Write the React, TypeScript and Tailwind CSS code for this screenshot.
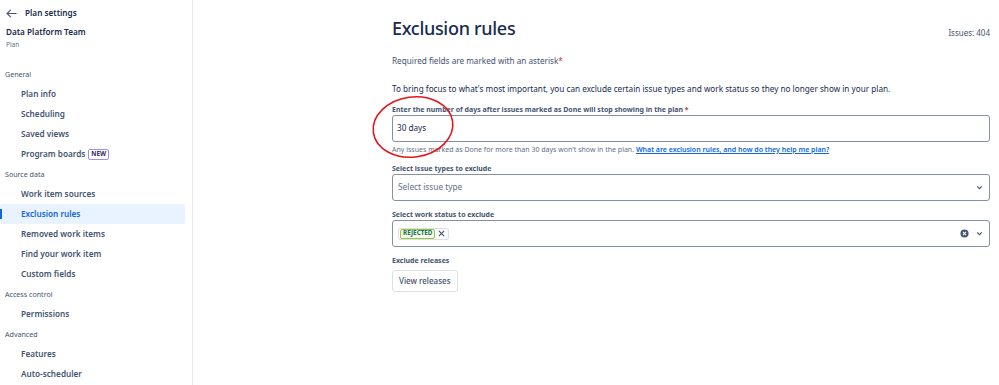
import React from 'react';

const navSections = [
  { title: 'General', items: ['Plan info', 'Scheduling', 'Saved views', 'Program boards'] },
  { title: 'Source data', items: ['Work item sources', 'Exclusion rules', 'Removed work items', 'Find your work item', 'Custom fields'] },
  { title: 'Access control', items: ['Permissions'] },
  { title: 'Advanced', items: ['Features', 'Auto-scheduler'] },
];

const Sidebar: React.FC = () => (
  <aside className="w-[193px] shrink-0 border-r border-[#e6e8eb] h-[385px] overflow-hidden">
    <div className="flex items-center h-[24px] pl-[6px] mt-[1px] gap-[8px] text-[#172b4d]">
      <svg width="11" height="9" viewBox="0 0 11 9" fill="none" stroke="#44546f" strokeWidth="1.1">
        <path d="M10.5 4.5H1M4.8 0.8L1 4.5l3.8 3.7" />
      </svg>
      <span className="text-[8.2px] font-semibold">Plan settings</span>
    </div>
    <div className="pl-[6px] text-[8.2px] font-semibold text-[#172b4d] leading-[14px]">Data Platform Team</div>
    <div className="pl-[6px] text-[6.5px] text-[#626f86] leading-[11px]">Plan</div>
    <div className="mt-[14px]">
      {navSections.map(section => (
        <div key={section.title}>
          <div className="h-[20px] flex items-center pl-[5px] text-[7.1px] text-[#44546f]">{section.title}</div>
          {section.items.map(item => {
            const active = item === 'Exclusion rules';
            return (
              <div
                key={item}
                className={`relative h-[20px] flex items-center pl-[21px] mr-[7px] text-[8.2px] font-semibold rounded-[2px] ${
                  active ? 'bg-[#e9f2ff] text-[#0c66e4]' : 'text-[#44546f]'
                }`}
              >
                {active && <span className="absolute left-0 top-[5px] w-[2px] h-[10px] bg-[#0c66e4]" />}
                {item}
                {item === 'Program boards' && (
                  <span className="ml-[3px] px-[2px] h-[11px] flex items-center border border-[#9f8fef] rounded-[2px] text-[6.3px] font-bold text-[#352c63] leading-none">
                    NEW
                  </span>
                )}
              </div>
            );
          })}
        </div>
      ))}
    </div>
  </aside>
);

const Chevron: React.FC = () => (
  <svg width="9" height="9" viewBox="0 0 10 10" fill="none" stroke="#44546f" strokeWidth="1.3">
    <path d="M2.5 3.8L5 6.3l2.5-2.5" />
  </svg>
);

const App: React.FC = () => {
  return (
    <div className="flex w-[999px] h-[385px] bg-white overflow-hidden" style={{ fontFamily: '"Noto Sans", "Open Sans", sans-serif' }}>
      <Sidebar />
      <main className="relative flex-1 pl-[199px] pr-[9px]">
        <div className="flex items-start justify-between pt-[15px]">
          <h1 className="text-[18px] leading-[26px] font-medium tracking-[-0.3px] text-[#172b4d]">Exclusion rules</h1>
          <span className="mt-[12px] text-[8px] text-[#44546f]">Issues: 404</span>
        </div>
        <p className="mt-[14px] text-[8.2px] text-[#44546f] leading-[12px]">
          Required fields are marked with an asterisk<span className="text-[#c9372c]">*</span>
        </p>
        <p className="mt-[16px] text-[8.2px] text-[#172b4d] leading-[12px]">
          To bring focus to what's most important, you can exclude certain issue types and work status so they no longer show in your plan.
        </p>

        <label className="block mt-[9px] text-[7px] font-bold text-[#44546f] leading-[11px]">
          Enter the number of days after issues marked as Done will stop showing in the plan<span className="text-[#c9372c]"> *</span>
        </label>
        <div className="h-[27px] border border-[#8590a2] rounded-[3px] flex items-center px-[4px] text-[8.2px] text-[#172b4d]">
          30 days
        </div>
        <p className="mt-[2px] text-[7px] text-[#626f86] leading-[11px]">
          Any issues marked as Done for more than 30 days won't show in the plan.{' '}
          <a className="text-[#0c66e4] underline font-semibold">What are exclusion rules, and how do they help me plan?</a>
        </p>

        <label className="block mt-[8px] text-[7px] font-bold text-[#44546f] leading-[11px]">Select issue types to exclude</label>
        <div className="h-[27px] border border-[#8590a2] rounded-[3px] flex items-center justify-between px-[5px] pr-[5px]">
          <span className="text-[8.3px] text-[#626f86]">Select issue type</span>
          <Chevron />
        </div>

        <label className="block mt-[8px] text-[7px] font-bold text-[#44546f] leading-[11px]">Select work status to exclude</label>
        <div className="h-[27px] border border-[#8590a2] rounded-[3px] flex items-center justify-between px-[5px] pr-[5px]">
          <span className="flex items-center h-[12px] border border-[#dcdfe4] rounded-[2px] bg-white">
            <span className="h-[10px] px-[2px] ml-[1px] flex items-center border border-[#94c748] rounded-[2px] text-[6.3px] font-bold text-[#216e4e] bg-[#f5fbe8] leading-none">
              REJECTED
            </span>
            <svg className="mx-[3px]" width="7" height="7" viewBox="0 0 8 8" stroke="#44546f" strokeWidth="1.3">
              <path d="M1 1l6 6M7 1L1 7" />
            </svg>
          </span>
          <span className="flex items-center gap-[6px]">
            <svg width="9" height="9" viewBox="0 0 10 10">
              <circle cx="5" cy="5" r="4.5" fill="#44546f" />
              <path d="M3.3 3.3l3.4 3.4M6.7 3.3L3.3 6.7" stroke="#fff" strokeWidth="1.2" />
            </svg>
            <Chevron />
          </span>
        </div>

        <label className="block mt-[8px] text-[7px] font-bold text-[#44546f] leading-[11px]">Exclude releases</label>
        <button className="h-[22px] px-[6px] border border-[#dcdfe4] rounded-[3px] text-[8px] font-medium text-[#44546f] bg-white">
          View releases
        </button>

        <svg className="absolute left-[177px] top-[94px] pointer-events-none" width="86" height="66" viewBox="0 0 86 66" fill="none">
          <ellipse cx="43" cy="33" rx="40" ry="30" transform="rotate(-8 43 33)" stroke="#e3161b" strokeWidth="1.6" />
        </svg>
      </main>
    </div>
  );
};

export default App;
